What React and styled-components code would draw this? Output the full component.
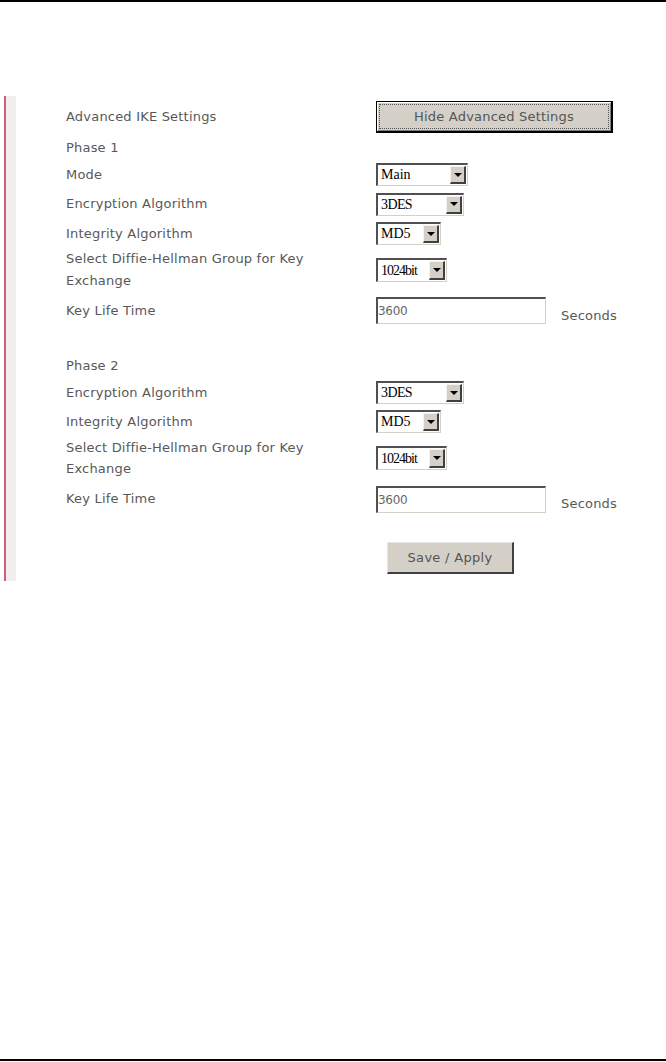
import React from 'react'
import styled, { createGlobalStyle } from 'styled-components'

const GlobalStyle = createGlobalStyle`
    html, body {
        margin: 0;
        padding: 0;
        background: #ffffff;
    }
    body {
        font-family: "DejaVu Sans", Tahoma, sans-serif;
    }
`

const Page = styled.div`
    display: flex;
    flex-direction: column;
    min-height: 1062px;
    box-sizing: border-box;
`

const Rule = styled.div`
    height: 2px;
    background: #000;
    margin-top: ${(p) => (p.$push ? 'auto' : '0')};
    margin-bottom: ${(p) => p.$bottom || 0}px;
`

const Panel = styled.div`
    margin-top: 94px;
    margin-left: 4px;
    width: 640px;
    display: flex;
    border-left: 2px solid #c9617e;
`

const Strip = styled.div`
    width: 10px;
    background: #f1f0ef;
    flex-shrink: 0;
`

const Form = styled.div`
    flex: 1;
    padding: 3px 0 0 50px;
    display: flex;
    flex-direction: column;
`

const Row = styled.div`
    display: grid;
    grid-template-columns: 310px auto 1fr;
    align-items: ${(p) => p.$align || 'center'};
    height: ${(p) => p.$h}px;
    box-sizing: border-box;
    padding-top: ${(p) => p.$pt || 0}px;
`

const Label = styled.div`
    font-size: 13px;
    color: #585858;
    line-height: ${(p) => p.$lh || 16}px;
    letter-spacing: 0.2px;
    white-space: nowrap;
`

const Unit = styled.div`
    font-size: 13px;
    color: #585858;
    letter-spacing: 0.2px;
    padding-left: 15px;
    padding-top: 9px;
`

const Select = styled.div`
    display: flex;
    align-items: stretch;
    width: ${(p) => p.$w}px;
    height: ${(p) => p.$ht || 23}px;
    box-sizing: border-box;
    border-top: 2px solid #505050;
    border-left: 2px solid #505050;
    border-bottom: 1px solid #d4d0c8;
    border-right: 1px solid #d4d0c8;
    background: #fff;
`

const SelectText = styled.span`
    flex: 1;
    font-family: "Liberation Serif", "Times New Roman", serif;
    font-size: 14px;
    color: #000;
    padding-left: 3px;
    display: flex;
    align-items: center;
    letter-spacing: ${(p) => p.$ls || 0}px;
    white-space: nowrap;
    overflow: hidden;
`

const ArrowButton = styled.span`
    width: 16px;
    margin: 1px;
    box-sizing: border-box;
    background: #d4d0c8;
    border-top: 1px solid #f4f2ee;
    border-left: 1px solid #f4f2ee;
    border-bottom: 2px solid #404040;
    border-right: 2px solid #404040;
    display: flex;
    align-items: center;
    justify-content: center;
    &::after {
        content: '';
        border-left: 4px solid transparent;
        border-right: 4px solid transparent;
        border-top: 4px solid #000;
    }
`

const TextInput = styled.div`
    width: 170px;
    height: 27px;
    box-sizing: border-box;
    border-top: 2px solid #505050;
    border-left: 2px solid #505050;
    border-bottom: 1px solid #d4d0c8;
    border-right: 1px solid #d4d0c8;
    background: #fff;
    font-size: 12px;
    color: #666;
    display: flex;
    align-items: center;
    letter-spacing: -0.3px;
`

const HideButton = styled.div`
    width: 237px;
    height: 32px;
    box-sizing: border-box;
    border: 1px solid #000;
    border-bottom-width: 2px;
    border-right-width: 2px;
    background: #d4d0c8;
    padding: 2px;
    box-shadow: inset 1px 1px 0 #ffffff, inset -1px -1px 0 #808080;
    span {
        display: flex;
        height: 100%;
        box-sizing: border-box;
        align-items: center;
        justify-content: center;
        border: 1px dotted #555;
        font-size: 13px;
        letter-spacing: 0.2px;
        color: #555;
    }
`

const SaveButton = styled.div`
    width: 127px;
    height: 32px;
    margin-left: 11px;
    box-sizing: border-box;
    background: #d4d0c8;
    border-top: 1px solid #e8e6e2;
    border-left: 1px solid #e8e6e2;
    border-bottom: 2px solid #404040;
    border-right: 2px solid #404040;
    display: flex;
    align-items: center;
    justify-content: center;
    font-size: 13px;
    letter-spacing: 0.3px;
    color: #555;
`

function Dropdown({ value, width, height, ls }) {
    return (
        <Select $w={width} $ht={height}>
            <SelectText $ls={ls}>{value}</SelectText>
            <ArrowButton />
        </Select>
    )
}

function PhaseRows({ title, titleH, rows, mode }) {
    return (
        <>
            <Row $h={titleH}>
                <Label>{title}</Label>
            </Row>
            {mode && (
                <Row $h={27}>
                    <Label>Mode</Label>
                    <Dropdown value="Main" width={92} />
                </Row>
            )}
            <Row $h={rows[0]}>
                <Label>Encryption Algorithm</Label>
                <Dropdown value="3DES" width={88} ls={-0.6} />
            </Row>
            <Row $h={rows[1]}>
                <Label>Integrity Algorithm</Label>
                <Dropdown value="MD5" width={65} />
            </Row>
            <Row $h={rows[2]}>
                <Label $lh={rows[3]}>
                    Select Diffie-Hellman Group for Key
                    <br />
                    Exchange
                </Label>
                <Dropdown value="1024bit" width={71} height={24} ls={-1} />
            </Row>
            <Row $h={rows[4]}>
                <Label>Key Life Time</Label>
                <TextInput>3600</TextInput>
                <Unit>Seconds</Unit>
            </Row>
        </>
    )
}

export default function App() {
    return (
        <Page>
            <GlobalStyle />
            <Rule />
            <Panel>
                <Strip />
                <Form>
                    <Row $h={36}>
                        <Label>Advanced IKE Settings</Label>
                        <HideButton>
                            <span>Hide Advanced Settings</span>
                        </HideButton>
                    </Row>
                    <PhaseRows title="Phase 1" titleH={26} mode rows={[32, 27, 46, 22, 35]} />
                    <Row $h={25} />
                    <PhaseRows title="Phase 2" titleH={26} rows={[27, 31, 42, 21, 40]} />
                    <Row $h={62} $align="start" $pt={23}>
                        <span />
                        <SaveButton>Save / Apply</SaveButton>
                    </Row>
                </Form>
            </Panel>
            <Rule $push $bottom={1} />
        </Page>
    )
}
